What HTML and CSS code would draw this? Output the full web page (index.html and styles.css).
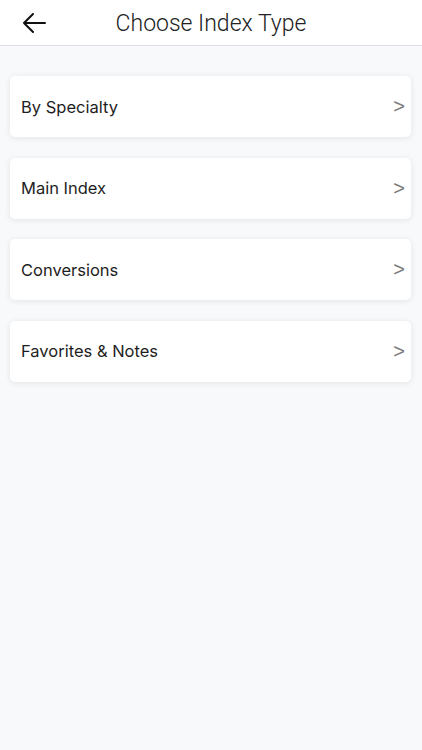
FILE: index.html
```html
<!DOCTYPE html>
<html lang="en">
<head>
    <meta charset="UTF-8">
    <meta name="viewport" content="width=device-width, initial-scale=1.0">
    <title>Choose Index Type</title>
    <link rel="stylesheet" href="styles.css">
</head>
<body>
    <!-- Top bar -->
    <div class="topbar">
        <a class="back" href="#">
            <svg width="24" height="20" viewBox="0 0 24 20">
                <path d="M23 10H2M11 1L2 10l9 9" fill="none" stroke="#111" stroke-width="2" stroke-linecap="round" stroke-linejoin="round"/>
            </svg>
        </a>
        <h1>Choose Index Type</h1>
    </div>

    <!-- Index types -->
    <div class="list">
        <a class="card" href="#"><span>By Specialty</span><span class="chev">&gt;</span></a>
        <a class="card" href="#"><span>Main Index</span><span class="chev">&gt;</span></a>
        <a class="card" href="#"><span>Conversions</span><span class="chev">&gt;</span></a>
        <a class="card" href="#"><span>Favorites &amp; Notes</span><span class="chev">&gt;</span></a>
    </div>
</body>
</html>
```
FILE: styles.css
```css
body {
    margin: 0;
    font-family: Inter, 'Liberation Sans', sans-serif;
    background-color: #f8f9fb;
    height: 100vh;
}

.topbar {
    height: 45px;
    background-color: white;
    border-bottom: 1px solid #dcdde0;
    display: flex;
    align-items: center;
    position: relative;
}

.back {
    display: flex;
    margin-left: 22px;
    margin-top: 1px;
}

.topbar h1 {
    position: absolute;
    left: 0;
    right: 0;
    top: 1px;
    margin: 0;
    line-height: 46px;
    text-align: center;
    font-family: Roboto, sans-serif;
    font-weight: 300;
    font-size: 23px;
    color: #222;
    pointer-events: none;
}

.list {
    padding: 30px 11px 0 10px;
    display: flex;
    flex-direction: column;
    gap: 20.5px;
}

.card {
    height: 61px;
    background-color: white;
    border-radius: 5px;
    box-shadow: 0 1px 6px rgba(0, 0, 0, 0.09);
    display: flex;
    align-items: center;
    justify-content: space-between;
    padding: 0 6px 0 11px;
    text-decoration: none;
    color: #1e1e1e;
    font-size: 16.5px;
}

.chev {
    color: #7a7a7a;
    font-family: 'Liberation Sans', sans-serif;
    font-size: 20px;
    font-weight: 300;
}
```
